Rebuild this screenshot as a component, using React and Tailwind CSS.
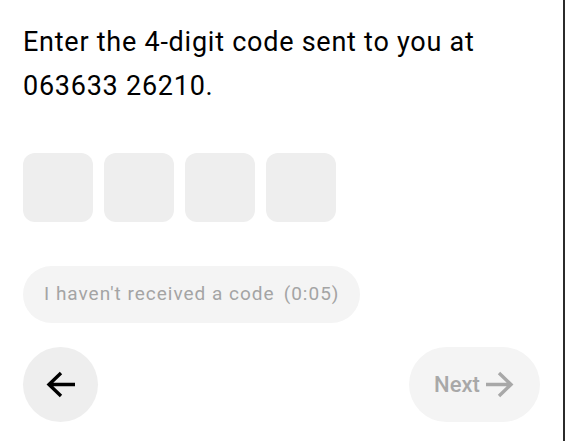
import React from 'react';

function Arrow({ dir = 'left', className }) {
    const d = dir === 'left' ? 'M29 13.5H3.5M15 2L3 13.5L15 25' : 'M1 13.5H25.5M14 2L26 13.5L14 25';
    return (
        <svg viewBox="0 0 30 27" width="30" height="27" className={className} fill="none">
            <path d={d} stroke="currentColor" strokeWidth="3.4" />
        </svg>
    );
}

export default function App() {
    return (
        <div
            className="w-[565px] h-[441px] bg-white border-r-2 border-[#2b2b2b] px-[23px] pt-[20px]"
            style={{ fontFamily: 'Roboto, "Noto Sans", sans-serif' }}
        >
            <h1 className="text-[27px] leading-[44px] tracking-[0.75px] text-black font-normal w-[500px]">
                Enter the 4-digit code sent to you at 063633 26210.
            </h1>

            <div className="mt-[45px] flex gap-[11px]">
                {[0, 1, 2, 3].map((i) => (
                    <div key={i} className="h-[69px] w-[70px] rounded-xl bg-[#eeeeee]" />
                ))}
            </div>

            <div className="mt-[44px] inline-flex h-[57px] items-center gap-[9px] rounded-full bg-[#f4f4f4] px-[21px] text-[19px] tracking-[1px] text-[#a4a4a4]">
                <span>I haven't received a code</span>
                <span>(0:05)</span>
            </div>

            <div className="mt-[24px] flex items-center justify-between">
                <button className="flex h-[75px] w-[75px] items-center justify-center rounded-full bg-[#eeeeee] text-black">
                    <Arrow dir="left" />
                </button>
                <button className="flex h-[75px] w-[131px] items-center justify-center gap-[5px] rounded-full bg-[#f4f4f4] text-[#a8a8a8]">
                    <span className="text-[22px] font-medium">Next</span>
                    <Arrow dir="right" />
                </button>
            </div>
        </div>
    );
}
